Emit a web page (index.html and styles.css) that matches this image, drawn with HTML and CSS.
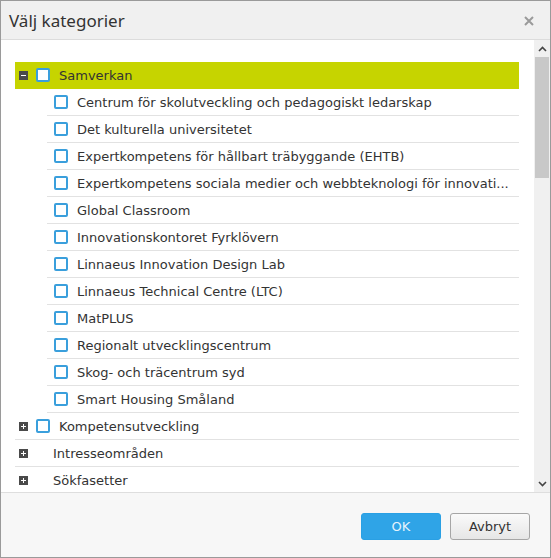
FILE: index.html
```html
<!DOCTYPE html>
<html lang="sv">
<head>
    <meta charset="UTF-8">
    <title>Välj kategorier</title>
    <link rel="stylesheet" href="styles.css">
</head>
<body>
    <div class="dialog">
        <div class="dialog-header">
            <h1>Välj kategorier</h1>
            <span class="close">
                <svg width="10" height="10" viewBox="0 0 10 10"><path d="M1 1L9 9M9 1L1 9" stroke="#9a9a9a" stroke-width="2"/></svg>
            </span>
        </div>
        <div class="dialog-body">
            <div class="tree">
                <ul>
                    <li>
                        <div class="row top selected">
                            <span class="toggle"><svg width="9" height="9" viewBox="0 0 9 9"><rect width="9" height="9" fill="#4a4a4a"/><path d="M2 4.5H7" stroke="#fff" stroke-width="1"/></svg></span>
                            <span class="check"></span>
                            <span class="label">Samverkan</span>
                        </div>
                        <ul class="children">
                            <li><div class="row"><span class="check"></span><span class="label">Centrum för skolutveckling och pedagogiskt ledarskap</span></div></li>
                            <li><div class="row"><span class="check"></span><span class="label">Det kulturella universitetet</span></div></li>
                            <li><div class="row"><span class="check"></span><span class="label">Expertkompetens för hållbart träbyggande (EHTB)</span></div></li>
                            <li><div class="row"><span class="check"></span><span class="label">Expertkompetens sociala medier och webbteknologi för innovati...</span></div></li>
                            <li><div class="row"><span class="check"></span><span class="label">Global Classroom</span></div></li>
                            <li><div class="row"><span class="check"></span><span class="label">Innovationskontoret Fyrklövern</span></div></li>
                            <li><div class="row"><span class="check"></span><span class="label">Linnaeus Innovation Design Lab</span></div></li>
                            <li><div class="row"><span class="check"></span><span class="label">Linnaeus Technical Centre (LTC)</span></div></li>
                            <li><div class="row"><span class="check"></span><span class="label">MatPLUS</span></div></li>
                            <li><div class="row"><span class="check"></span><span class="label">Regionalt utvecklingscentrum</span></div></li>
                            <li><div class="row"><span class="check"></span><span class="label">Skog- och träcentrum syd</span></div></li>
                            <li><div class="row"><span class="check"></span><span class="label">Smart Housing Småland</span></div></li>
                        </ul>
                    </li>
                    <li>
                        <div class="row top">
                            <span class="toggle"><svg width="9" height="9" viewBox="0 0 9 9"><rect width="9" height="9" fill="#4a4a4a"/><path d="M2 4.5H7M4.5 2V7" stroke="#fff" stroke-width="1"/></svg></span>
                            <span class="check"></span>
                            <span class="label">Kompetensutveckling</span>
                        </div>
                    </li>
                    <li>
                        <div class="row top">
                            <span class="toggle"><svg width="9" height="9" viewBox="0 0 9 9"><rect width="9" height="9" fill="#4a4a4a"/><path d="M2 4.5H7M4.5 2V7" stroke="#fff" stroke-width="1"/></svg></span>
                            <span class="label no-check">Intresseområden</span>
                        </div>
                    </li>
                    <li>
                        <div class="row top">
                            <span class="toggle"><svg width="9" height="9" viewBox="0 0 9 9"><rect width="9" height="9" fill="#4a4a4a"/><path d="M2 4.5H7M4.5 2V7" stroke="#fff" stroke-width="1"/></svg></span>
                            <span class="label no-check">Sökfasetter</span>
                        </div>
                    </li>
                </ul>
            </div>
            <div class="scrollbar">
                <span class="arrow"><svg width="9" height="6" viewBox="0 0 9 6"><path d="M1 5L4.5 1.5L8 5" stroke="#444" stroke-width="1.6" fill="none"/></svg></span>
                <div class="track"><div class="thumb"></div></div>
                <span class="arrow"><svg width="9" height="6" viewBox="0 0 9 6"><path d="M1 1L4.5 4.5L8 1" stroke="#444" stroke-width="1.6" fill="none"/></svg></span>
            </div>
        </div>
        <div class="dialog-footer">
            <button class="btn btn-primary">OK</button>
            <button class="btn">Avbryt</button>
        </div>
    </div>
</body>
</html>
```

FILE: styles.css
```css
body {
    margin: 0;
    padding: 0;
    background: #fff;
    font-family: 'DejaVu Sans', Verdana, sans-serif;
    color: #333;
}
ul {
    list-style: none;
    margin: 0;
    padding: 0;
}
.dialog {
    width: 551px;
    height: 558px;
    box-sizing: border-box;
    border: 1px solid #9a9a9a;
    display: flex;
    flex-direction: column;
    background: #fff;
}
.dialog-header {
    height: 38px;
    flex: none;
    display: flex;
    align-items: center;
    justify-content: space-between;
    padding: 0 16px 0 8px;
    background: #f0f0f0;
    border-bottom: 1px solid #dcdcdc;
}
.dialog-header h1 {
    margin: 0;
    font-family: 'Noto Sans', 'Open Sans', sans-serif;
    font-size: 17px;
    font-weight: normal;
    color: #333;
}
.close {
    display: flex;
    margin-top: 1px;
}
.dialog-body {
    flex: 1;
    display: flex;
    min-height: 0;
}
.tree {
    flex: 1;
    min-width: 0;
    overflow: hidden;
    padding: 22px 15px 0 14px;
}
.row {
    height: 26px;
    display: flex;
    align-items: center;
    border-bottom: 1px solid #e2e2e2;
    font-size: 13px;
    white-space: nowrap;
}
.row.top {
    padding-left: 4px;
}
.row.selected {
    background: #c6d400;
    border-bottom-color: #c6d400;
}
.children {
    margin-left: 32px;
}
.children .row {
    padding-left: 7px;
}
.toggle {
    display: flex;
    width: 9px;
    height: 9px;
    margin-right: 8px;
}
.check {
    flex: none;
    width: 10px;
    height: 10px;
    border: 2px solid #3a9fdc;
    border-radius: 2px;
    background: #fff;
    margin-right: 9px;
}
.label {
    overflow: hidden;
    text-overflow: ellipsis;
    padding-right: 6px;
}
.label.no-check {
    margin-left: 17px;
}
.scrollbar {
    width: 16px;
    flex: none;
    display: flex;
    flex-direction: column;
    background: #f0f0f0;
}
.arrow {
    height: 17px;
    display: flex;
    align-items: center;
    justify-content: center;
}
.track {
    flex: 1;
    padding: 0 1px;
}
.thumb {
    height: 121px;
    background: #c8c8c8;
}
.dialog-footer {
    height: 65px;
    flex: none;
    box-sizing: border-box;
    background: #f7f7f7;
    border-top: 1px solid #dedede;
    display: flex;
    justify-content: flex-end;
    align-items: flex-start;
    gap: 9px;
    padding: 20px 20px 0 0;
}
.btn {
    width: 80px;
    height: 27px;
    font-family: 'DejaVu Sans', Verdana, sans-serif;
    font-size: 13px;
    color: #333;
    border: 1px solid #a6a6a6;
    border-radius: 3px;
    background: linear-gradient(#fafafa, #e6e6e6);
    cursor: pointer;
}
.btn-primary {
    background: #2fa4e7;
    border-color: #2aa0e4;
    color: #e6f3fc;
}
```
